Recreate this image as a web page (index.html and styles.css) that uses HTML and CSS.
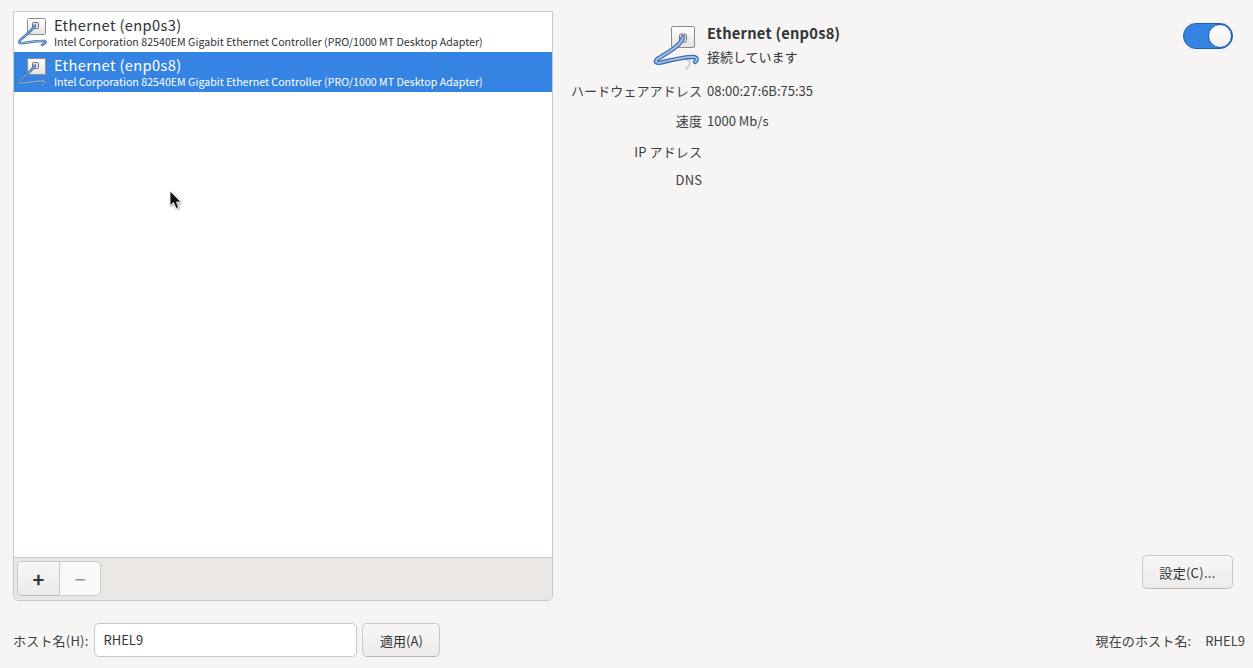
FILE: index.html
```html
<!DOCTYPE html>
<html lang="ja">
<head>
<meta charset="utf-8">
<title>ネットワーク接続</title>
<link rel="stylesheet" href="styles.css">
</head>
<body>
<svg class="defs" width="0" height="0" aria-hidden="true">
  <defs>
    <linearGradient id="plate" x1="0" y1="0" x2="0" y2="1">
      <stop offset="0" stop-color="#ffffff"/>
      <stop offset="1" stop-color="#e2e2e0"/>
    </linearGradient>
    <symbol id="eth-small" viewBox="0 0 32 32">
      <rect x="11.500" y="2.500" width="18" height="16" rx="1" fill="url(#plate)" stroke="#8f8f8c"/>
      <rect x="16.500" y="6.500" width="6" height="6" rx="1" fill="#e4e4e2" stroke="#6f6f72"/>
      <path d="M19 9.500C15 16 8 20 4 24.500C2 27 4 27.500 8 27C15 26 22 24.500 28 25C30.500 25.500 30 27 26 29" fill="none" stroke="#3f6fae" stroke-width="2.600" stroke-linecap="round"/>
      <path d="M19 9.500C15 16 8 20 4 24.500C2 27 4 27.500 8 27C15 26 22 24.500 28 25C30.500 25.500 30 27 26 29" fill="none" stroke="#a0c0e8" stroke-width="1" stroke-linecap="round"/>
    </symbol>
    <symbol id="eth-large" viewBox="0 0 48 48">
      <rect x="18.500" y="2.500" width="23" height="21" rx="1.500" fill="url(#plate)" stroke="#8a8a87"/>
      <rect x="26.500" y="10" width="7" height="8" rx="1.500" fill="#e0e0de" stroke="#77777a"/>
      <path d="M34 36C38 37 38 40 33 45" fill="none" stroke="#c3d3e6" stroke-width="2" stroke-linecap="round"/>
      <path d="M30 13C28 22 14 29 5 34.500C1 37.500 3 39.500 8 38.500C18 36 32 32.500 41 33C45 34 44 36.500 42 38" fill="none" stroke="#3f70ae" stroke-width="4.400" stroke-linecap="round"/>
      <path d="M30 13C28 22 14 29 5 34.500C1 37.500 3 39.500 8 38.500C18 36 32 32.500 41 33C45 34 44 36.500 42 38" fill="none" stroke="#a6c4ea" stroke-width="1.800" stroke-linecap="round"/>
    </symbol>
  </defs>
</svg>

<div class="app">
  <div class="main">
    <section class="devices">
      <div class="device-list">
        <div class="device">
          <svg class="device-icon"><use href="#eth-small"/></svg>
          <div class="device-text">
            <div class="device-name">Ethernet (enp0s3)</div>
            <div class="device-desc">Intel Corporation 82540EM Gigabit Ethernet Controller (PRO/1000 MT Desktop Adapter)</div>
          </div>
        </div>
        <div class="device selected">
          <svg class="device-icon"><use href="#eth-small"/></svg>
          <div class="device-text">
            <div class="device-name">Ethernet (enp0s8)</div>
            <div class="device-desc">Intel Corporation 82540EM Gigabit Ethernet Controller (PRO/1000 MT Desktop Adapter)</div>
          </div>
        </div>
      </div>
      <div class="toolbar">
        <div class="btn-group">
          <button class="tool-btn add">+</button>
          <button class="tool-btn remove">−</button>
        </div>
      </div>
    </section>

    <section class="details">
      <div class="details-head">
        <svg class="detail-icon"><use href="#eth-large"/></svg>
        <div class="detail-title">
          <div class="detail-name">Ethernet (enp0s8)</div>
          <div class="detail-status">接続しています</div>
        </div>
        <div class="switch"><div class="switch-knob"></div></div>
      </div>
      <div class="props">
        <div class="prop-label">ハードウェアアドレス</div><div class="prop-value">08:00:27:6B:75:35</div>
        <div class="prop-label">速度</div><div class="prop-value">1000 Mb/s</div>
        <div class="prop-label">IP アドレス</div><div class="prop-value"></div>
        <div class="prop-label">DNS</div><div class="prop-value"></div>
      </div>
      <div class="details-actions">
        <button class="btn settings">設定(C)...</button>
      </div>
    </section>
  </div>

  <footer class="hostbar">
    <label class="host-label">ホスト名(H):</label>
    <div class="host-input">RHEL9</div>
    <button class="btn apply">適用(A)</button>
    <div class="host-current">
      <span class="host-current-label">現在のホスト名:</span>
      <span>RHEL9</span>
    </div>
  </footer>
</div>

<svg class="cursor" width="16" height="22" viewBox="0 0 16 22" aria-hidden="true">
  <path d="M1 1V15.500L4.500 12.500L7 18.500L9.500 17.500L7.500 12H12Z" fill="#111" stroke="#fff" stroke-width="0.800"/>
</svg>
</body>
</html>
```

FILE: styles.css
```css
* { box-sizing: border-box; }

html, body {
  margin: 0;
  padding: 0;
  width: 1253px;
  height: 668px;
  overflow: hidden;
}

body {
  background: #f6f5f4;
  color: #2e3436;
  font-family: "Noto Sans CJK JP", "Noto Sans", sans-serif;
  font-size: 13px;
}

.defs { position: absolute; }

.app {
  display: flex;
  flex-direction: column;
  height: 668px;
  padding: 11px 8px 0 13px;
}

.main {
  display: flex;
  height: 590px;
}

.devices {
  width: 540px;
  display: flex;
  flex-direction: column;
  border: 1px solid #cdc7c2;
  border-radius: 0 0 5px 5px;
  background: #ffffff;
  overflow: hidden;
}

.device-list {
  flex: 1;
  background: #ffffff;
}

.device {
  display: flex;
  height: 40px;
  align-items: center;
  padding-left: 2px;
  gap: 6px;
}

.device.selected {
  background: #3584e4;
  color: #ffffff;
}

.device-icon {
  width: 32px;
  height: 32px;
  flex: none;
}

.device-name {
  font-size: 14.67px;
  letter-spacing: 0.36px;
  line-height: 18px;
}

.device-desc {
  font-size: 10.67px;
  line-height: 15px;
}

.toolbar {
  height: 43px;
  border-top: 1px solid #cdc7c2;
  background: #e9e6e3;
  padding: 3px;
}

.btn-group {
  display: flex;
  width: 84px;
  height: 35px;
}

.tool-btn {
  height: 35px;
  padding: 0;
  font-family: inherit;
  font-size: 20px;
  border: 1px solid #cdc7c2;
  line-height: 1;
}

.tool-btn.add {
  width: 43px;
  color: #2e3436;
  font-weight: 700;
  background: linear-gradient(#f8f7f6, #edebe9);
  border-radius: 5px 0 0 5px;
  border-bottom-color: #bfb8b1;
}

.tool-btn.remove {
  width: 41px;
  color: #929595;
  background: #faf9f8;
  border-left: 0;
  border-radius: 0 5px 5px 0;
}

.details {
  flex: 1;
  display: flex;
  flex-direction: column;
}

.details-head {
  display: flex;
  height: 63px;
  padding: 3px 12px 0 100px;
  margin-bottom: 2px;
}

.detail-icon {
  width: 48px;
  height: 48px;
  margin-top: 10px;
  flex: none;
}

.detail-title {
  flex: 1;
  margin-left: 6px;
}

.detail-name {
  font-size: 14.67px;
  font-weight: 700;
  letter-spacing: 0.24px;
  line-height: 20px;
  margin-top: 9px;
}

.detail-status {
  font-size: 13px;
  line-height: 20px;
  margin-top: 4px;
}

.switch {
  width: 50px;
  height: 26px;
  margin-top: 9px;
  border: 1px solid #1b5cae;
  border-radius: 13px;
  background: #3584e4;
  display: flex;
  justify-content: flex-end;
}

.switch-knob {
  width: 24px;
  height: 24px;
  border-radius: 50%;
  background: linear-gradient(#ffffff, #f0efee);
  border: 1px solid #1b5cae;
}

.props {
  display: grid;
  grid-template-columns: 149px auto;
  grid-template-rows: 30px 31px 28px 30px;
  column-gap: 5px;
  align-content: start;
  padding-top: 5px;
  flex: 1;
}

.prop-label {
  text-align: right;
  line-height: 20px;
  white-space: nowrap;
  color: #3b4043;
  letter-spacing: 0.1px;
}

.prop-value {
  line-height: 20px;
  color: #3b4043;
}

.details-actions {
  display: flex;
  justify-content: flex-end;
  padding: 0 12px 12px 0;
}

.btn {
  font-family: inherit;
  font-size: 13px;
  color: #2e3436;
  background: linear-gradient(#f8f7f6, #edebe9);
  border: 1px solid #cdc7c2;
  border-bottom-color: #bfb8b1;
  border-radius: 5px;
  padding: 0;
  height: 34px;
}

.settings {
  width: 91px;
  letter-spacing: 0.3px;
}

.hostbar {
  display: flex;
  align-items: center;
  height: 34px;
  margin-top: 22px;
}

.host-label {
  margin-right: 6px;
  color: #3b4043;
  letter-spacing: 0.2px;
}

.host-input {
  width: 263px;
  height: 34px;
  line-height: 32px;
  padding-left: 8px;
  background: #ffffff;
  border: 1px solid #cdc7c2;
  border-radius: 5px;
  margin-right: 5px;
}

.apply { width: 78px; }

.host-current {
  margin-left: auto;
  display: flex;
  gap: 14px;
  color: #3b4043;
}

.host-current-label { letter-spacing: 0.15px; }

.cursor {
  position: absolute;
  left: 169px;
  top: 190px;
  filter: drop-shadow(1px 1px 1px rgba(0, 0, 0, 0.35));
}
```
